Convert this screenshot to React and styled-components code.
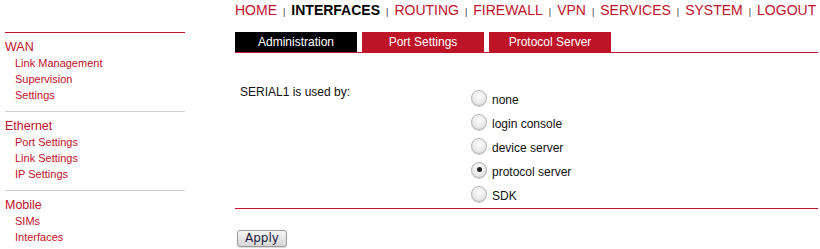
import React from "react";
import styled, { createGlobalStyle } from "styled-components";

const RED = "#c0112b";

const Global = createGlobalStyle`
  html, body { margin: 0; padding: 0; background: #fff; }
  body { font-family: "Liberation Sans", Arial, sans-serif; }
`;

const Page = styled.div`
  display: flex;
  align-items: flex-start;
  padding-left: 5px;
  width: 820px;
  box-sizing: border-box;
`;

const Sidebar = styled.nav`
  width: 180px;
  margin-top: 32px;
  border-top: 1px solid ${RED};
`;

const Section = styled.div`
  padding: 6px 0 8px;
  border-top: ${(p) => (p.$first ? "none" : "1px solid #cfcfcf")};
`;

const Heading = styled.div`
  font-size: 12.5px;
  line-height: 16px;
  color: ${RED};
`;

const SideLink = styled.div`
  font-size: 11px;
  line-height: 16px;
  padding-left: 10px;
  color: ${RED};
`;

const Main = styled.main`
  margin-left: 50px;
  width: 583px;
`;

const TopNav = styled.div`
  display: flex;
  align-items: baseline;
  height: 20px;
  line-height: 20px;
  font-size: 14px;
  white-space: nowrap;
`;

const NavItem = styled.span`
  color: ${(p) => (p.$active ? "#000" : RED)};
  font-weight: ${(p) => (p.$active ? "bold" : "normal")};
`;

const Sep = styled.span`
  font-size: 9px;
  color: #333;
  margin: 0 6px;
`;

const TabBar = styled.div`
  display: flex;
  gap: 5px;
  margin-top: 12px;
  border-bottom: 1px solid ${RED};
`;

const Tab = styled.div`
  width: 122px;
  height: 20px;
  line-height: 20px;
  text-align: center;
  font-size: 12px;
  color: #fff;
  background: ${(p) => (p.$active ? "#000" : "#be1427")};
`;

const Form = styled.div`
  display: grid;
  grid-template-columns: 235px 1fr;
  padding-top: 31px;
  border-bottom: 1px solid ${RED};
`;

const Label = styled.div`
  font-size: 12px;
  line-height: 16px;
  padding-left: 5px;
  color: #111;
`;

const Options = styled.div`
  display: flex;
  flex-direction: column;
  padding-top: 4px;
`;

const OptionRow = styled.label`
  display: flex;
  align-items: center;
  height: 24px;
  font-size: 12px;
  color: #111;
`;

const RadioDot = styled.span`
  width: 16px;
  height: 16px;
  box-sizing: border-box;
  border-radius: 50%;
  margin: -5px 5px 0 1px;
  border: 1px solid #b4b4b4;
  background: radial-gradient(circle at 50% 35%, #fbfbfb 0%, #ececec 55%, #d4d4d4 100%);
  box-shadow: 0 1px 1px rgba(0, 0, 0, 0.18);
  display: flex;
  align-items: center;
  justify-content: center;
  &::after {
    content: "";
    width: 5px;
    height: 5px;
    border-radius: 50%;
    background: ${(p) => (p.$checked ? "#222" : "transparent")};
  }
`;

const Button = styled.button`
  margin: 21px 0 0 2px;
  height: 17px;
  padding: 0 7px;
  font-family: "DejaVu Sans", sans-serif;
  font-size: 12px;
  line-height: 15px;
  color: #1c1c3c;
  border: 1px solid #9a9a9a;
  border-radius: 3px;
  background: linear-gradient(#f6f6f6, #d6d6d6);
  box-shadow: 0 1px 1px rgba(0, 0, 0, 0.15);
`;

const sections = [
  { title: "WAN", links: ["Link Management", "Supervision", "Settings"] },
  { title: "Ethernet", links: ["Port Settings", "Link Settings", "IP Settings"] },
  { title: "Mobile", links: ["SIMs", "Interfaces"] },
];

const nav = ["HOME", "INTERFACES", "ROUTING", "FIREWALL", "VPN", "SERVICES", "SYSTEM", "LOGOUT"];
const options = ["none", "login console", "device server", "protocol server", "SDK"];

export default function App() {
  return (
    <>
      <Global />
      <Page>
        <Sidebar>
          {sections.map((s, i) => (
            <Section key={s.title} $first={i === 0}>
              <Heading>{s.title}</Heading>
              {s.links.map((l) => (
                <SideLink key={l}>{l}</SideLink>
              ))}
            </Section>
          ))}
        </Sidebar>
        <Main>
          <TopNav>
            {nav.map((n, i) => (
              <React.Fragment key={n}>
                {i > 0 && <Sep>|</Sep>}
                <NavItem $active={n === "INTERFACES"}>{n}</NavItem>
              </React.Fragment>
            ))}
          </TopNav>
          <TabBar>
            <Tab $active>Administration</Tab>
            <Tab>Port Settings</Tab>
            <Tab>Protocol Server</Tab>
          </TabBar>
          <Form>
            <Label>SERIAL1 is used by:</Label>
            <Options>
              {options.map((o) => (
                <OptionRow key={o}>
                  <RadioDot $checked={o === "protocol server"} />
                  {o}
                </OptionRow>
              ))}
            </Options>
          </Form>
          <Button>Apply</Button>
        </Main>
      </Page>
    </>
  );
}
